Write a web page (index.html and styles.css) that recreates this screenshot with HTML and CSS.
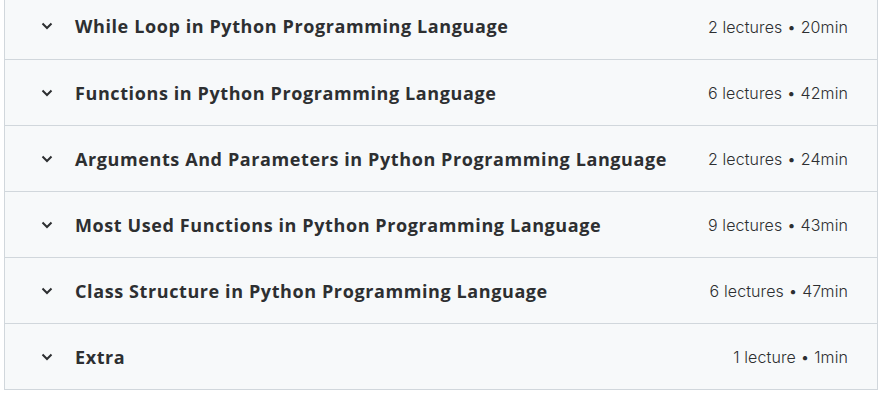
FILE: index.html
```html
<!DOCTYPE html>
<html lang="en">
<head>
    <meta charset="UTF-8">
    <title>Course content</title>
    <link rel="stylesheet" href="styles.css">
</head>
<body>
    <div class="curriculum">
        <div class="section">
            <span class="chev"><svg viewBox="0 0 12 8" width="12" height="8"><path d="M1.5 1.5 6 6 10.5 1.5" fill="none" stroke="#2d2f31" stroke-width="2"/></svg></span>
            <span class="title">While Loop in Python Programming Language</span>
            <span class="meta">2 lectures • 20min</span>
        </div>
        <div class="section">
            <span class="chev"><svg viewBox="0 0 12 8" width="12" height="8"><path d="M1.5 1.5 6 6 10.5 1.5" fill="none" stroke="#2d2f31" stroke-width="2"/></svg></span>
            <span class="title">Functions in Python Programming Language</span>
            <span class="meta">6 lectures • 42min</span>
        </div>
        <div class="section">
            <span class="chev"><svg viewBox="0 0 12 8" width="12" height="8"><path d="M1.5 1.5 6 6 10.5 1.5" fill="none" stroke="#2d2f31" stroke-width="2"/></svg></span>
            <span class="title">Arguments And Parameters in Python Programming Language</span>
            <span class="meta">2 lectures • 24min</span>
        </div>
        <div class="section">
            <span class="chev"><svg viewBox="0 0 12 8" width="12" height="8"><path d="M1.5 1.5 6 6 10.5 1.5" fill="none" stroke="#2d2f31" stroke-width="2"/></svg></span>
            <span class="title">Most Used Functions in Python Programming Language</span>
            <span class="meta">9 lectures • 43min</span>
        </div>
        <div class="section">
            <span class="chev"><svg viewBox="0 0 12 8" width="12" height="8"><path d="M1.5 1.5 6 6 10.5 1.5" fill="none" stroke="#2d2f31" stroke-width="2"/></svg></span>
            <span class="title">Class Structure in Python Programming Language</span>
            <span class="meta">6 lectures • 47min</span>
        </div>
        <div class="section">
            <span class="chev"><svg viewBox="0 0 12 8" width="12" height="8"><path d="M1.5 1.5 6 6 10.5 1.5" fill="none" stroke="#2d2f31" stroke-width="2"/></svg></span>
            <span class="title">Extra</span>
            <span class="meta">1 lecture • 1min</span>
        </div>
    </div>
</body>
</html>
```

FILE: styles.css
```css
body { margin: 0; background: #fff; font-family: "Inter", "Liberation Sans", sans-serif; color: #2d2f31; }
.curriculum { margin: -7px 4px 0 4px; border: 1px solid #d1d7dc; border-top: none; background: #f7f9fa; }
.section { display: flex; align-items: center; height: 65px; padding: 0 29px 0 36px; border-top: 1px solid #d1d7dc; }
.section:first-child { border-top: none; height: 66px; }
.chev { display: flex; width: 12px; margin-right: 22px; }
.title { flex: 1; font-family: "Open Sans", sans-serif; font-weight: 700; font-size: 18px; letter-spacing: 0.6px; }
.meta { font-size: 16px; font-weight: 300; letter-spacing: 0.1px; color: #2d2f31; padding-top: 1px; }
```
